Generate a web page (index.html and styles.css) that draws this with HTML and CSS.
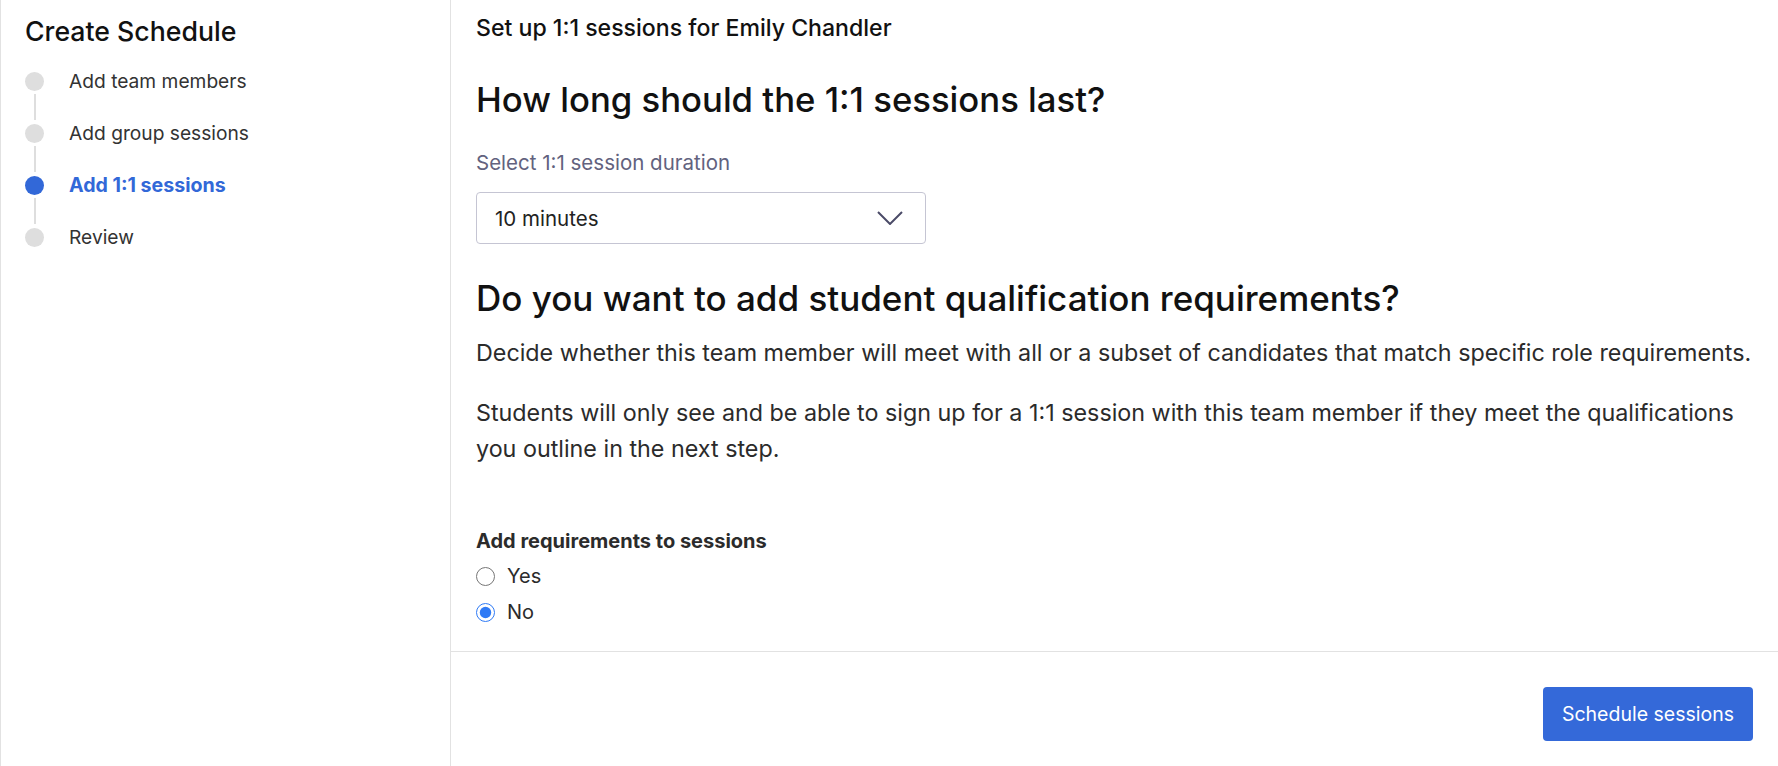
FILE: index.html
```html
<!DOCTYPE html>
<html lang="en">
<head>
  <meta charset="UTF-8">
  <meta name="viewport" content="width=device-width, initial-scale=1.0">
  <title>Create Schedule</title>
  <link rel="stylesheet" href="styles.css">
</head>
<body>
  <aside class="sidebar">
    <h2 class="sidebar-title">Create Schedule</h2>
    <ol class="steps">
      <li class="step">Add team members</li>
      <li class="step">Add group sessions</li>
      <li class="step active">Add 1:1 sessions</li>
      <li class="step">Review</li>
    </ol>
  </aside>

  <main class="main">
    <section class="content">
      <div class="page-title">Set up 1:1 sessions for Emily Chandler</div>

      <h1 class="question">How long should the 1:1 sessions last?</h1>
      <label class="field-label" for="duration">Select 1:1 session duration</label>
      <div class="select">
        <span>10 minutes</span>
        <svg class="chevron" width="26" height="14" viewBox="0 0 26 14">
          <polyline points="1,1 13,13 25,1" fill="none" stroke="#4b4b68" stroke-width="2"/>
        </svg>
      </div>

      <h1 class="question second">Do you want to add student qualification requirements?</h1>
      <p class="text">Decide whether this team member will meet with all or a subset of candidates that match specific role requirements.</p>
      <p class="text spaced">Students will only see and be able to sign up for a 1:1 session with this team member if they meet the qualifications you outline in the next step.</p>

      <div class="choice-label">Add requirements to sessions</div>
      <div class="radios">
        <label class="radio"><input type="radio" name="req"> Yes</label>
        <label class="radio"><input type="radio" name="req" checked> No</label>
      </div>
    </section>

    <footer class="footer">
      <button class="primary">Schedule sessions</button>
    </footer>
  </main>
</body>
</html>
```

FILE: styles.css
```css
body {
  margin: 0;
  display: flex;
  height: 100vh;
  font-family: Inter, "Noto Sans", sans-serif;
  color: #2b2b2b;
  background: #fff;
}

/* left step list */
.sidebar {
  width: 451px;
  flex-shrink: 0;
  border-left: 1px solid #e2e2e2;
  border-right: 1px solid #e2e2e2;
  padding: 15px 0 0 24px;
  box-sizing: border-box;
}
.sidebar-title {
  margin: 0;
  font-size: 26.7px;
  line-height: 32px;
  font-weight: 500;
  color: #111;
}
.steps {
  list-style: none;
  margin: 8px 0 0;
  padding: 0;
}
.step {
  position: relative;
  display: flex;
  align-items: center;
  gap: 25px;
  height: 52px;
  font-size: 19.2px;
  color: #333;
}
.step::before {
  content: "";
  width: 19px;
  height: 19px;
  border-radius: 50%;
  background: #dedede;
  flex-shrink: 0;
}
.step:not(:last-child)::after {
  content: "";
  position: absolute;
  left: 8.5px;
  top: 39px;
  width: 2px;
  height: 26px;
  background: #dedede;
}
.step.active {
  color: #3268d8;
  font-weight: 700;
  font-size: 19.6px;
}
.step.active::before {
  background: #3268d8;
}

/* main panel */
.main {
  flex: 1;
  display: flex;
  flex-direction: column;
}
.content {
  padding: 16px 10px 23px 25px;
  border-bottom: 1px solid #e2e2e2;
}
.page-title {
  font-size: 23.1px;
  line-height: 24px;
  font-weight: 500;
  color: #111;
}
.question {
  margin: 39px 0 0;
  font-size: 34.7px;
  line-height: 40px;
  font-weight: 500;
  color: #111;
}
.question.second {
  margin-top: 34px;
  font-size: 35px;
}
.field-label {
  display: block;
  margin-top: 32px;
  font-size: 20.5px;
  line-height: 24px;
  color: #62627e;
}
.select {
  margin-top: 17px;
  width: 450px;
  height: 52px;
  box-sizing: border-box;
  border: 1px solid #c5c5d3;
  border-radius: 4px;
  display: flex;
  align-items: center;
  justify-content: space-between;
  padding: 0 22px 0 18px;
  font-size: 20.5px;
  color: #222;
}
.text {
  margin: 17px 0 0;
  max-width: 1280px;
  font-size: 23.3px;
  line-height: 36px;
  color: #2b2b2b;
}
.text.spaced {
  margin-top: 24px;
  max-width: 1260px;
}
.choice-label {
  margin-top: 62px;
  font-size: 20px;
  line-height: 24px;
  font-weight: 700;
  color: #2b2b2b;
}
.radios {
  display: flex;
  flex-direction: column;
  gap: 4px;
  margin-top: 7px;
}
.radio {
  display: flex;
  align-items: center;
  gap: 12px;
  height: 32px;
  font-size: 20px;
  color: #2b2b2b;
}
.radio input {
  margin: 0;
  width: 19px;
  height: 19px;
  accent-color: #2f7af5;
}

.footer {
  display: flex;
  justify-content: flex-end;
  padding: 35px 25px 0;
}
.primary {
  height: 54px;
  padding: 0 19px;
  border: none;
  border-radius: 4px;
  background: #3469d9;
  color: #fff;
  font-family: inherit;
  font-size: 19.5px;
  cursor: pointer;
}
```
